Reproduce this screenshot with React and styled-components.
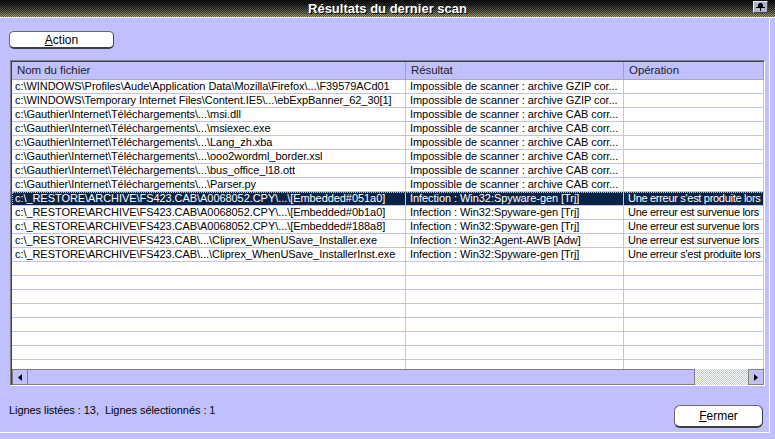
import React from "react";
import styled, { createGlobalStyle } from "styled-components";

const LAV = "#c0c0ff";

const GlobalStyle = createGlobalStyle`
  html, body {
    margin: 0;
    padding: 0;
    background: ${LAV};
  }
  body {
    font-family: "Liberation Sans", Arial, sans-serif;
    font-size: 11px;
    letter-spacing: -0.06px;
    color: #000;
  }
`;

const rows = [
  ["c:\\WINDOWS\\Profiles\\Aude\\Application Data\\Mozilla\\Firefox\\...\\F39579ACd01", "Impossible de scanner : archive GZIP cor...", ""],
  ["c:\\WINDOWS\\Temporary Internet Files\\Content.IE5\\...\\ebExpBanner_62_30[1]", "Impossible de scanner : archive GZIP cor...", ""],
  ["c:\\Gauthier\\Internet\\Téléchargements\\...\\msi.dll", "Impossible de scanner : archive CAB corr...", ""],
  ["c:\\Gauthier\\Internet\\Téléchargements\\...\\msiexec.exe", "Impossible de scanner : archive CAB corr...", ""],
  ["c:\\Gauthier\\Internet\\Téléchargements\\...\\Lang_zh.xba", "Impossible de scanner : archive CAB corr...", ""],
  ["c:\\Gauthier\\Internet\\Téléchargements\\...\\ooo2wordml_border.xsl", "Impossible de scanner : archive CAB corr...", ""],
  ["c:\\Gauthier\\Internet\\Téléchargements\\...\\bus_office_l18.ott", "Impossible de scanner : archive CAB corr...", ""],
  ["c:\\Gauthier\\Internet\\Téléchargements\\...\\Parser.py", "Impossible de scanner : archive CAB corr...", ""],
  ["c:\\_RESTORE\\ARCHIVE\\FS423.CAB\\A0068052.CPY\\...\\[Embedded#051a0]", "Infection : Win32:Spyware-gen [Trj]", "Une erreur s'est produite lors", true],
  ["c:\\_RESTORE\\ARCHIVE\\FS423.CAB\\A0068052.CPY\\...\\[Embedded#0b1a0]", "Infection : Win32:Spyware-gen [Trj]", "Une erreur est survenue lors"],
  ["c:\\_RESTORE\\ARCHIVE\\FS423.CAB\\A0068052.CPY\\...\\[Embedded#188a8]", "Infection : Win32:Spyware-gen [Trj]", "Une erreur est survenue lors"],
  ["c:\\_RESTORE\\ARCHIVE\\FS423.CAB\\...\\Cliprex_WhenUSave_Installer.exe", "Infection : Win32:Agent-AWB [Adw]", "Une erreur est survenue lors"],
  ["c:\\_RESTORE\\ARCHIVE\\FS423.CAB\\...\\Cliprex_WhenUSave_InstallerInst.exe", "Infection : Win32:Spyware-gen [Trj]", "Une erreur s'est produite lors"],
];

const emptyRows = Array.from({ length: 9 });

const App = () => {
  return (
    <>
      <GlobalStyle />
      <Window>
        <TitleBar>
          <span />
          <Title>Résultats du dernier scan</Title>
          <PinButton>
            <svg width="9" height="8" viewBox="0 0 9 8">
              <path d="M3 0h3v1h1v3H2V1h1z" fill="#000" />
              <rect x="0" y="4" width="9" height="1" fill="#000" />
              <rect x="4" y="5" width="1" height="3" fill="#000" />
            </svg>
          </PinButton>
        </TitleBar>
        <Panel>
          <RoundButton $w={105} $h={18}>
            <u>A</u>ction
          </RoundButton>
          <List>
            <ListInner>
              <HeaderRow>
                <HeadCell>Nom du fichier</HeadCell>
                <HeadCell>Résultat</HeadCell>
                <HeadCell>Opération</HeadCell>
              </HeaderRow>
              <Rows>
                {rows.map(([file, result, op, selected], i) => (
                  <Row key={i} $selected={selected}>
                    <Cell $pad={3}>{file}</Cell>
                    <Cell>{result}</Cell>
                    <Cell $tight>{op}</Cell>
                  </Row>
                ))}
                {emptyRows.map((_, i) => (
                  <Row key={"e" + i}>
                    <Cell />
                    <Cell />
                    <Cell />
                  </Row>
                ))}
              </Rows>
              <ScrollBar>
                <ArrowButton>
                  <svg width="4" height="7" viewBox="0 0 4 7">
                    <path d="M4 0v7L0 3.5z" fill="#000" />
                  </svg>
                </ArrowButton>
                <Thumb />
                <Track />
                <ArrowButton>
                  <svg width="4" height="7" viewBox="0 0 4 7">
                    <path d="M0 0v7l4-3.5z" fill="#000" />
                  </svg>
                </ArrowButton>
              </ScrollBar>
            </ListInner>
          </List>
          <Footer>
            <Status>Lignes listées : 13,&nbsp; Lignes sélectionnés : 1</Status>
            <RoundButton $w={89} $h={23} $r={6}>
              <u>F</u>ermer
            </RoundButton>
          </Footer>
        </Panel>
      </Window>
    </>
  );
};

export default App;

const Window = styled.div`
  width: 775px;
  height: 439px;
  display: flex;
  flex-direction: column;
  background: ${LAV};
  overflow: hidden;
`;

const TitleBar = styled.div`
  height: 17px;
  flex: none;
  display: grid;
  grid-template-columns: 1fr auto 1fr;
  align-items: center;
  border-bottom: 1px solid #fff;
  background-color: #000;
  background-image: repeating-conic-gradient(
      rgba(0, 0, 0, 0.45) 0 25%,
      rgba(255, 255, 255, 0.08) 0 50%
    ),
    linear-gradient(#000 0%, #222 35%, #5c5c44 70%, #a4a474 100%);
  background-size: 2px 2px, 100% 100%;
`;

const Title = styled.div`
  color: #fff;
  font-weight: bold;
  font-size: 13px;
  letter-spacing: 0;
  line-height: 17px;
  text-shadow: 1px 1px 0 #000;
`;

const PinButton = styled.div`
  justify-self: end;
  align-self: start;
  margin: 1px 7px 0 0;
  width: 13px;
  height: 10px;
  display: flex;
  align-items: center;
  justify-content: center;
  background: #b4b4cc;
  border: 1px solid;
  border-color: #e8e8ff #404050 #404050 #e8e8ff;
`;

const Panel = styled.div`
  flex: 1;
  display: flex;
  flex-direction: column;
  margin: 0 5px 6px 0;
  border-right: 1px solid #fff;
  border-bottom: 1px solid #fff;
  padding-top: 13px;
`;

const RoundButton = styled.div`
  box-sizing: border-box;
  width: ${(p) => p.$w}px;
  height: ${(p) => p.$h}px;
  margin-left: 9px;
  display: flex;
  align-items: center;
  justify-content: center;
  background: #fff;
  border: 1px solid #6a6a6a;
  border-right-color: #404040;
  border-bottom: 2px solid #404040;
  border-radius: ${(p) => p.$r || 5}px;
  font-size: 12px;
  letter-spacing: 0;
  color: #000;

  u {
    text-underline-offset: 1px;
  }
`;

const List = styled.div`
  box-sizing: border-box;
  width: 755px;
  height: 326px;
  margin: 11px 0 0 10px;
  border: 1px solid;
  border-color: #808080 #fff #fff #808080;
  background: ${LAV};
`;

const ListInner = styled.div`
  height: 100%;
  box-sizing: border-box;
  display: flex;
  flex-direction: column;
  border-top: 1px solid #404040;
  border-left: 1px solid #404040;
`;

const grid = `
  display: grid;
  grid-template-columns: 394px 218px 1fr;
`;

const HeaderRow = styled.div`
  ${grid}
  flex: none;
  height: 17px;
  border-bottom: 1px solid #a8a8b8;
  background: ${LAV};
`;

const HeadCell = styled.div`
  line-height: 17px;
  padding-left: 5px;
  font-size: 11.5px;
  color: #202020;
  border-right: 1px solid #b0a27a;
`;

const Rows = styled.div`
  flex: 1;
  overflow: hidden;
  background: #fff;
`;

const Row = styled.div`
  ${grid}
  height: 14px;
  background: ${(p) => (p.$selected ? "#0a2446" : "#fff")};
  color: ${(p) => (p.$selected ? "#fff" : "#000")};
  outline: ${(p) => (p.$selected ? `1px dotted ${LAV}` : "none")};
  outline-offset: -1px;
`;

const Cell = styled.div`
  box-sizing: border-box;
  height: 14px;
  line-height: 13px;
  padding-left: ${(p) => p.$pad || 4}px;
  letter-spacing: ${(p) => (p.$tight ? "-0.3px" : "inherit")};
  white-space: nowrap;
  overflow: hidden;
  border-right: 1px solid ${LAV};
  border-bottom: 1px solid ${LAV};
`;

const ScrollBar = styled.div`
  flex: none;
  height: 16px;
  display: flex;
  background: ${LAV};
`;

const ArrowButton = styled.div`
  box-sizing: border-box;
  width: 16px;
  height: 16px;
  flex: none;
  display: flex;
  align-items: center;
  justify-content: center;
  border: 1px solid #808080;
  background: ${LAV};
`;

const Thumb = styled.div`
  flex: 1;
  box-sizing: border-box;
  border: 1px solid #808080;
  border-left: none;
  background: ${LAV};
`;

const Track = styled.div`
  width: 53px;
  flex: none;
  background-color: #fff;
  background-image: repeating-conic-gradient(${LAV} 0 25%, #fff 0 50%);
  background-size: 2px 2px;
`;

const Footer = styled.div`
  display: flex;
  justify-content: space-between;
  align-items: flex-start;
  margin-top: 19px;
  padding-right: 6px;
`;

const Status = styled.div`
  margin: -1px 0 0 9px;
  line-height: 12px;
  font-size: 11px;
`;
